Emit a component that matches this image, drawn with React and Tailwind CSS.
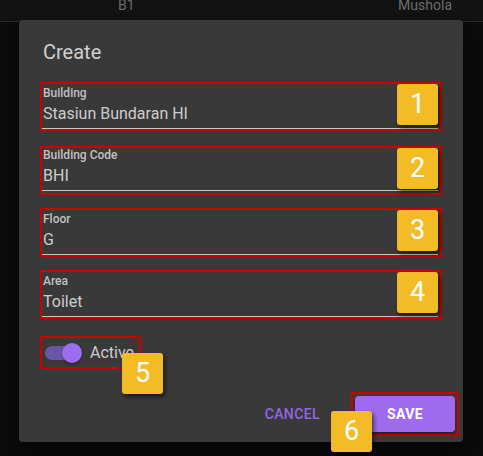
import React from 'react';

const fields = [
    { label: 'Building', value: 'Stasiun Bundaran HI', n: '1', mt: 'mt-[14px]', lt: 'pt-[2px]' },
    { label: 'Building Code', value: 'BHI', n: '2', mt: 'mt-[15px]', lt: 'pt-0' },
    { label: 'Floor', value: 'G', n: '3', mt: 'mt-[13px]', lt: 'pt-[2px]' },
    { label: 'Area', value: 'Toilet', n: '4', mt: 'mt-[13px]', lt: 'pt-[2px]' },
];

const Badge = ({ n, className }) => (
    <div
        className={`absolute w-[41px] h-[41px] bg-[#f3bc26] rounded-[3px] flex items-center justify-center text-white text-[27px] leading-none shadow-[2px_3px_4px_rgba(0,0,0,0.55)] ${className}`}
    >
        {n}
    </div>
);

const Field = ({ f }) => (
    <div className={`relative h-[49px] border-2 border-[#cc0000] ${f.mt}`}>
        <div className={`${f.lt} pl-[1px] text-[12px] leading-[14px] font-medium text-[#c2c2c2]`}>{f.label}</div>
        <div className="mt-[4px] pl-[1px] text-[16px] leading-[19px] text-[#cdcdcd]">{f.value}</div>
        <div className="mt-[5px] mr-[2px] border-b border-[#c8c8c8]" />
        <Badge n={f.n} className="top-0 right-[2px]" />
    </div>
);

export default function App() {
    return (
        <div className="relative w-[483px] h-[456px] overflow-hidden bg-[#0b0b0b] font-['Roboto',sans-serif]">
            {/* table row behind the dialog */}
            <div className="h-[27px] bg-[#121212] border-b border-[#2a2a2a] text-[14px] leading-5 text-[#6c6c6c]">
                <div className="flex -mt-[5px]">
                    <span className="ml-[118px]">B1</span>
                    <span className="ml-auto mr-[31px]">Mushola</span>
                </div>
            </div>

            {/* dialog */}
            <div className="absolute left-[19px] top-[20px] w-[444px] h-[422px] bg-[#393939] rounded-[4px] shadow-[0_11px_15px_rgba(0,0,0,0.4)]">
                <div className="px-6 pt-4 text-[20px] leading-8 text-[#d0d0d0]">Create</div>

                <div className="px-[21px]">
                    {fields.map((f) => (
                        <Field key={f.n} f={f} />
                    ))}

                    {/* switch */}
                    <div className="relative mt-[17px] w-[101px] h-[33px] border-2 border-[#cc0000] flex items-center">
                        <div className="relative ml-[3px] w-[34px] h-[14px]">
                            <div className="w-[34px] h-[14px] rounded-full bg-[#6b55a6]" />
                            <div className="absolute -top-[3px] left-[17px] w-5 h-5 rounded-full bg-[#9c6cf1] shadow-[0_1px_2px_rgba(0,0,0,0.4)]" />
                        </div>
                        <span className="ml-[11px] text-[16px] leading-5 text-[#cdcdcd]">Active</span>
                        <Badge n="5" className="top-[15px] left-[80px]" />
                    </div>
                </div>

                {/* actions */}
                <div className="absolute right-[4px] bottom-[6px] flex items-center">
                    <span className="mr-[31px] text-[14px] font-medium tracking-[0.4px] text-[#9565e6]">CANCEL</span>
                    <div className="relative border-2 border-[#cc0000] p-[2px]">
                        <div className="w-[100px] h-9 rounded-[4px] bg-[#9e6bef] flex items-center justify-center text-[14px] font-bold tracking-[0.4px] text-white shadow-[0_2px_3px_rgba(0,0,0,0.4)]">
                            SAVE
                        </div>
                        <Badge n="6" className="top-[17px] -left-[22px]" />
                    </div>
                </div>
            </div>
        </div>
    );
}
